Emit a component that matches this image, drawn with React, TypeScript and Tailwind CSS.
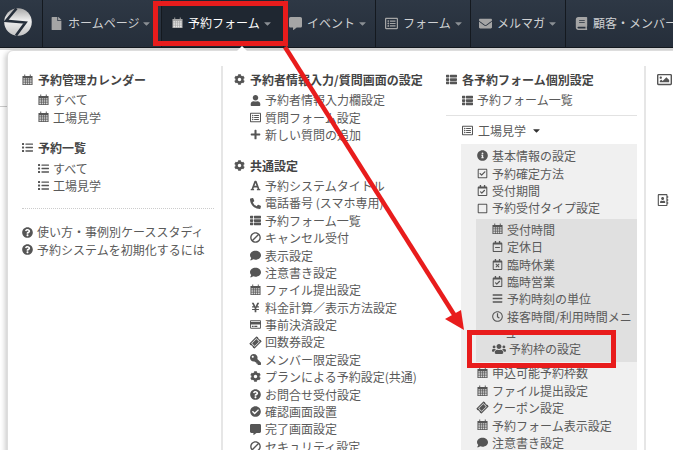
import type { IconType } from "react-icons";
import {
  FaBan,
  FaBars,
  FaBook,
  FaCaretDown,
  FaCheckCircle,
  FaCog,
  FaComment,
  FaCommentAlt,
  FaEnvelope,
  FaFile,
  FaFont,
  FaInfoCircle,
  FaKey,
  FaList,
  FaPhoneAlt,
  FaPlus,
  FaQuestionCircle,
  FaRegAddressBook,
  FaRegCalendarCheck,
  FaRegCalendarMinus,
  FaRegCalendarTimes,
  FaRegCheckSquare,
  FaRegClock,
  FaRegCreditCard,
  FaRegImage,
  FaRegListAlt,
  FaRegSquare,
  FaThList,
  FaTicketAlt,
  FaUser,
  FaUsers,
  FaYenSign,
} from "react-icons/fa";

// calendar with rings and a grid, the icon font one has no match in the package
const CalIcon: IconType = ({ className }) => (
  <svg viewBox="0 0 12 12" width="11" height="12" className={className}>
    <path
      d="M2.5 0h1v2h-1zM8.5 0h1v2h-1zM0.5 1.5h11v10h-11z"
      fill="currentColor"
    />
    <path
      d="M1.5 4h2v1.5h-2zM4.2 4h1.5v1.5h-1.5zM6.4 4h1.5v1.5h-1.5zM8.6 4h1.9v1.5h-1.9zM1.5 6.3h2v1.6h-2zM4.2 6.3h1.5v1.6h-1.5zM6.4 6.3h1.5v1.6h-1.5zM8.6 6.3h1.9v1.6h-1.9zM1.5 8.7h2v1.8h-2zM4.2 8.7h1.5v1.8h-1.5zM6.4 8.7h1.5v1.8h-1.5zM8.6 8.7h1.9v1.8h-1.9z"
      fill="#ffffff"
      fillOpacity="0.75"
    />
  </svg>
);

const TicketIcon: IconType = ({ className }) => <FaTicketAlt className={`${className} -rotate-45`} />;
const SlashIcon: IconType = ({ className }) => <FaBan className={`${className} -scale-x-100`} />;
const KeyIcon: IconType = ({ className }) => <FaKey className={`${className} -scale-x-100`} />;

const nav = [
  { label: "ホームページ", icon: FaFile, w: "w-[119px]", pl: "pl-[7px]" },
  { label: "予約フォーム", icon: CalIcon, w: "w-[122px]", pl: "pl-[10px]", active: true },
  { label: "イベント", icon: FaCommentAlt, w: "w-[92px]", pl: "pl-[5px]" },
  { label: "フォーム", icon: FaRegListAlt, w: "w-[95px]", pl: "pl-[9px]" },
  { label: "メルマガ", icon: FaEnvelope, w: "w-[95px]", pl: "pl-[8px]" },
  { label: "顧客・メンバー", icon: FaBook, w: "w-[130px]", pl: "pl-[9px]" },
];

function Row({ icon: Icon, text }: { icon: IconType; text: string }) {
  return (
    <div className="flex items-center gap-[4px] h-[17.4px] whitespace-nowrap">
      <Icon className="text-[11px] shrink-0 text-[#555]" />
      <span>{text}</span>
    </div>
  );
}

function Heading({ icon: Icon, text }: { icon: IconType; text: string }) {
  return (
    <div className="flex items-center gap-[5px] h-[17.4px] mb-[3px] whitespace-nowrap font-bold text-[#444]">
      <Icon className="text-[11px] shrink-0 text-[#555]" />
      <span>{text}</span>
    </div>
  );
}

const profile: [IconType, string][] = [
  [FaUser, "予約者情報入力欄設定"],
  [FaRegListAlt, "質問フォーム設定"],
  [FaPlus, "新しい質問の追加"],
];

const common: [IconType, string][] = [
  [FaFont, "予約システムタイトル"],
  [FaPhoneAlt, "電話番号 (スマホ専用)"],
  [FaThList, "予約フォーム一覧"],
  [SlashIcon, "キャンセル受付"],
  [FaComment, "表示設定"],
  [FaComment, "注意書き設定"],
  [CalIcon, "ファイル提出設定"],
  [FaYenSign, "料金計算／表示方法設定"],
  [FaRegCreditCard, "事前決済設定"],
  [TicketIcon, "回数券設定"],
  [KeyIcon, "メンバー限定設定"],
  [FaCog, "プランによる予約設定(共通)"],
  [FaQuestionCircle, "お問合せ受付設定"],
  [FaCheckCircle, "確認画面設置"],
  [FaCommentAlt, "完了画面設定"],
  [SlashIcon, "セキュリティ設定"],
];

const basic: [IconType, string][] = [
  [FaInfoCircle, "基本情報の設定"],
  [FaRegCheckSquare, "予約確定方法"],
  [FaRegCalendarCheck, "受付期間"],
  [FaRegSquare, "予約受付タイプ設定"],
];

const reception: [IconType, string][] = [
  [CalIcon, "受付時間"],
  [FaRegCalendarMinus, "定休日"],
  [FaRegCalendarTimes, "臨時休業"],
  [FaRegCalendarCheck, "臨時営業"],
  [FaBars, "予約時刻の単位"],
];

const after: [IconType, string][] = [
  [CalIcon, "申込可能予約枠数"],
  [CalIcon, "ファイル提出設定"],
  [TicketIcon, "クーポン設定"],
  [CalIcon, "予約フォーム表示設定"],
  [FaComment, "注意書き設定"],
];

export default function App() {
  return (
    <div
      className="relative h-[450px] w-[673px] overflow-hidden bg-white text-[12px] leading-[17.4px] text-[#5a5a5a]"
      style={{ fontFamily: '"Noto Sans CJK JP", "Noto Sans", sans-serif' }}
    >
      {/* NAV */}
      <nav className="flex h-[48px] bg-gradient-to-b from-[#2e3845] to-[#252e3a] border-b border-[#14191f] overflow-hidden">
        <div className="flex w-[43px] shrink-0 items-center border-r border-[#14191f] pl-[4px]">
          <svg width="28" height="28" viewBox="0 0 28 28" className="mt-[-4px]">
            <defs>
              <linearGradient id="logo" x1="0" y1="0" x2="0" y2="1">
                <stop offset="0" stopColor="#a8a8a8" />
                <stop offset="0.45" stopColor="#f0f0f0" />
                <stop offset="1" stopColor="#c4c4c4" />
              </linearGradient>
            </defs>
            <circle cx="14" cy="14" r="13.8" fill="url(#logo)" />
            <path d="M12.5 0.5L2 12.8L21.5 14.5L12 27.5" fill="none" stroke="#262f3b" strokeWidth="2.6" />
          </svg>
        </div>
        {nav.map((item) => (
          <div
            key={item.label}
            className={`flex ${item.w} ${item.pl} shrink-0 items-center gap-[5px] pb-[1px] border-r border-[#14191f] whitespace-nowrap ${
              item.active ? "bg-[#1f2731] text-white" : "text-[#cfd1d3]"
            }`}
          >
            <item.icon className="shrink-0 text-[13px] text-[#a5a5a5]" />
            <span>{item.label}</span>
            <FaCaretDown className="text-[11px] shrink-0 ml-[-3px] text-[#8a8f94]" />
          </div>
        ))}
      </nav>
      <div className="h-[2px] bg-[#d8d8d8]" />
      <div className="absolute left-0 top-[106px] h-px w-[7px] bg-[#cccccc]" />

      {/* MENU PANEL */}
      <div className="absolute left-[7px] top-[50px] flex h-[420px] w-[680px] rounded-tl-[6px] border border-[#dddddd] bg-white pt-[15px] shadow-[-2px_2px_5px_rgba(0,0,0,0.2)]">
        <div className="absolute left-[229px] top-[-5px] h-0 w-0 border-x-[5px] border-b-[5px] border-x-transparent border-b-white" />

        <div className="w-[215px] shrink-0 border-r-2 border-[#e6e6e6] pl-[14px] pr-[7px] pt-[5px]">
          <Heading icon={CalIcon} text="予約管理カレンダー" />
          <div className="pl-[16px]">
            <Row icon={CalIcon} text="すべて" />
            <Row icon={CalIcon} text="工場見学" />
          </div>
          <div className="mt-[13px]">
            <Heading icon={FaList} text="予約一覧" />
          </div>
          <div className="pl-[16px]">
            <Row icon={FaList} text="すべて" />
            <Row icon={FaList} text="工場見学" />
          </div>
          <div className="mt-[14px] mb-[14px] border-t border-dotted border-[#cccccc]" />
          <Row icon={FaQuestionCircle} text="使い方・事例別ケーススタディ" />
          <Row icon={FaQuestionCircle} text="予約システムを初期化するには" />
        </div>

        <div className="w-[223px] shrink-0 pl-[11px] pt-[5px]">
          <Heading icon={FaCog} text="予約者情報入力/質問画面の設定" />
          <div className="pl-[16px]">
            {profile.map(([icon, text]) => (
              <Row key={text} icon={icon} text={text} />
            ))}
          </div>
          <div className="mt-[13px]">
            <Heading icon={FaCog} text="共通設定" />
          </div>
          <div className="pl-[16px]">
            {common.map(([icon, text]) => (
              <Row key={text} icon={icon} text={text} />
            ))}
          </div>
        </div>

        <div className="w-[200px] shrink-0 border-r-2 border-[#e6e6e6] pr-[7px] pt-[5px]">
          <Heading icon={FaThList} text="各予約フォーム個別設定" />
          <div className="pl-[16px]">
            <Row icon={FaThList} text="予約フォーム一覧" />
          </div>
          <div className="mt-[6px] mb-[6px] border-t border-[#e2e2e2]" />
          <div className="flex items-center gap-[5px] h-[17.4px] pl-[16px]">
            <FaRegListAlt className="text-[11px] text-[#555]" />
            <span>工場見学</span>
            <FaCaretDown className="text-[11px] text-[#333]" />
          </div>
          <div className="ml-[15px] mt-[5px] bg-[#f0f0f0] pt-[3px]">
            <div className="pl-[16px]">
              {basic.map(([icon, text]) => (
                <Row key={text} icon={icon} text={text} />
              ))}
            </div>
            <div className="ml-[15px] mt-[2px] bg-[#e0e0e0] pl-[16px] pt-[2px] pb-[5px]">
              {reception.map(([icon, text]) => (
                <Row key={text} icon={icon} text={text} />
              ))}
              <Row icon={FaRegClock} text="接客時間/利用時間メニ" />
              <div className="h-[15px] pl-[13px] leading-[15px]">ュ</div>
              <div className="flex items-center gap-[3px] h-[17.4px] whitespace-nowrap">
                <FaUsers className="text-[14px] shrink-0 text-[#555]" />
                <span>予約枠の設定</span>
              </div>
            </div>
            <div className="pl-[16px] pt-[2px]">
              {after.map(([icon, text]) => (
                <Row key={text} icon={icon} text={text} />
              ))}
            </div>
          </div>
        </div>

        <div className="flex-1 pl-[11px] pt-[5px] text-[#555]">
          <div className="flex h-[17.4px] items-center">
            <FaRegImage className="text-[15px]" />
          </div>
          <div className="mt-[103px] flex h-[17.4px] items-center">
            <FaRegAddressBook className="text-[12px]" />
          </div>
        </div>
      </div>

      {/* RED ANNOTATIONS */}
      <div className="absolute left-[153px] top-[1px] h-[45px] w-[135px] border-[5px] border-[#e81c1c]" />
      <div className="absolute left-[467px] top-[330px] h-[38px] w-[149px] border-[5px] border-[#e81c1c]" />
      <svg className="absolute left-0 top-0" width="673" height="450" viewBox="0 0 673 450">
        <line x1="285" y1="47" x2="455" y2="316" stroke="#e81c1c" strokeWidth="4.5" />
        <polygon points="464,330 445,319 461,310" fill="#e81c1c" />
      </svg>
    </div>
  );
}
